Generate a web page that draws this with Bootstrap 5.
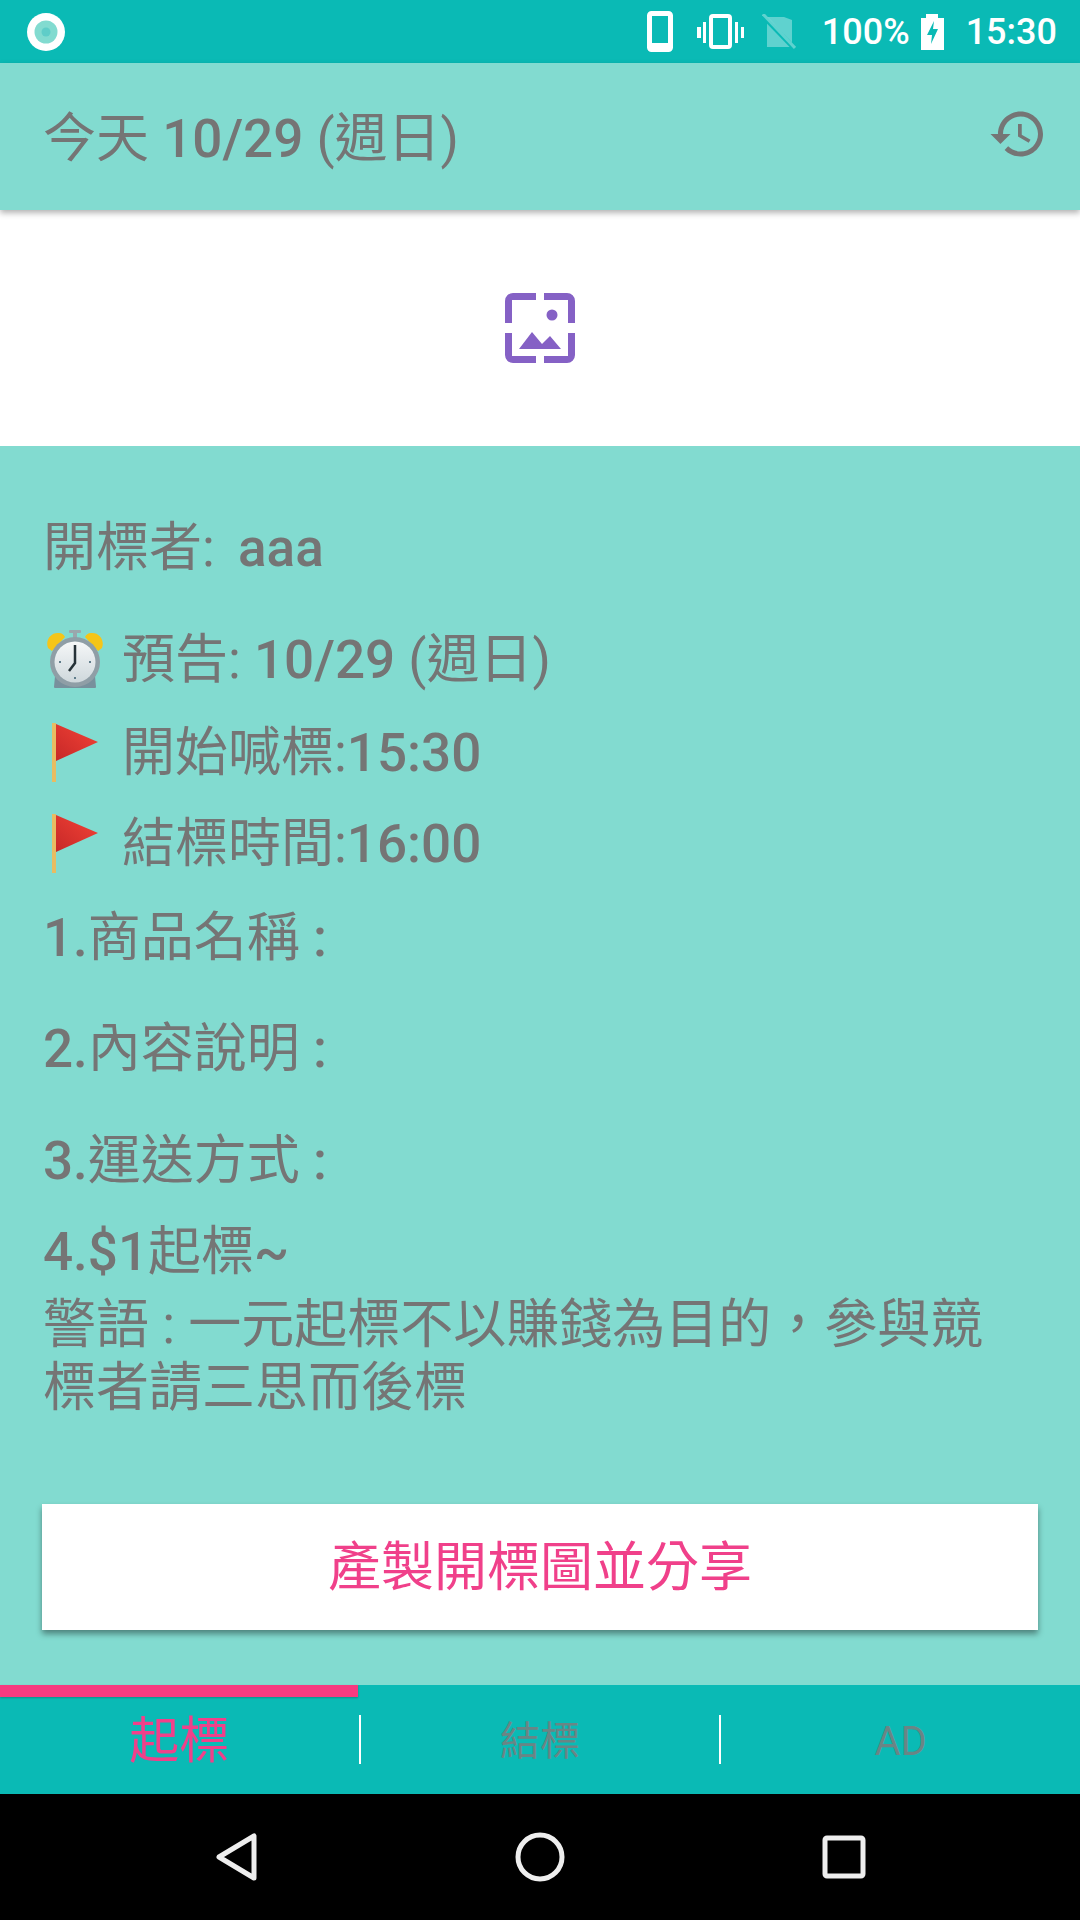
<!DOCTYPE html>
<html lang="zh-Hant">
<head>
    <meta charset="UTF-8">
    <meta name="viewport" content="width=device-width, initial-scale=1.0">
    <title>開標</title>
    <link href="https://cdn.jsdelivr.net/npm/bootstrap@5.3.0/dist/css/bootstrap.min.css" rel="stylesheet">
    <style>
        body {
            width: 1080px;
            height: 1920px;
            overflow: hidden;
            font-family: Roboto, "Noto Sans CJK TC", sans-serif;
            color: #757575;
            background: #82dbd0;
        }
        b { font-weight: 500; }
        .status-bar {
            height: 63px;
            background: #0abab5;
            color: #fff;
            font-size: 36px;
            font-weight: 500;
            line-height: 1;
            padding: 0 23px 0 27px;
        }
        .status-gap-a { margin-right: 24px; }
        .status-gap-b { margin-right: 18px; }
        .status-gap-c { margin-right: 26px; }
        .status-gap-d { margin-right: 11px; }
        .status-gap-e { margin-right: 22px; }
        .app-head {
            height: 147px;
            background: #82dbd0;
            padding: 0 32px 0 43px;
            font-size: 53px;
            line-height: 64px;
            box-shadow: 0 3px 6px rgba(0,0,0,.3);
            position: relative;
            z-index: 2;
        }
        .head-title { padding-top: 5px; }
        .head-icon { margin-bottom: 5px; }
        .banner {
            height: 236px;
            background: #fff;
        }
        .body-area {
            height: 1239px;
            background: #82dbd0;
            padding: 69px 42px 0 43px;
            font-size: 53px;
            line-height: 67px;
        }
        .txt-line { margin: 0; height: 64px; white-space: nowrap; }
        .line-txt { padding-top: 2px; }
        .gap-48 { margin-bottom: 48px; }
        .gap-47 { margin-bottom: 47px; }
        .gap-30 { margin-bottom: 30px; }
        .gap-29 { margin-bottom: 29px; }
        .gap-27 { margin-bottom: 27px; }
        .gap-9 { margin-bottom: 9px; }
        .gap-n1 { margin-bottom: -1px; }
        .name-gap { margin-left: 10px; }
        .emoji-box { width: 79px; flex: none; }
        .clock-pic { margin-left: 3px; }
        .flag-pic { margin-left: 9px; }
        .share-btn {
            width: 996px;
            height: 126px;
            margin: 85px 0 0 -1px;
            padding-top: 9px;
            background: #fff;
            color: #f0408a;
            font-size: 53px;
            line-height: 1;
            border: 0;
            border-radius: 0;
            box-shadow: 0 4px 6px rgba(0,0,0,.4);
        }
        .share-btn:hover { background: #fff; color: #f0408a; }
        .tab-strip {
            height: 109px;
            background: #0abab5;
            position: relative;
        }
        .tab-cell {
            flex: 1 1 0;
            text-align: center;
            font-size: 40px;
            line-height: 1;
            color: #6a8585;
            padding-top: 5px;
        }
        .tab-cell.on { color: #f0408a; font-size: 50px; padding-top: 3px; }
        .tab-sep { width: 2px; height: 49px; background: #fff; flex: none; }
        .tab-marker {
            position: absolute;
            left: 0;
            top: 0;
            width: 358px;
            height: 12px;
            background: #f63a80;
            box-shadow: 0 1px 2px rgba(0,0,0,.25);
        }
        .sys-nav {
            height: 126px;
            background: #000;
            padding: 0 214px 0 216px;
        }
    </style>
</head>
<body class="d-flex flex-column">
    <div class="status-bar d-flex align-items-center">
        <svg class="me-auto" width="38" height="38" viewBox="0 0 38 38">
            <circle cx="19" cy="19" r="19" fill="#fff"/>
            <circle cx="19" cy="19" r="11.5" fill="#82dbd0"/>
            <circle cx="19" cy="19" r="4.5" fill="#5fcdc8"/>
        </svg>
        <svg class="status-gap-a" width="26" height="41" viewBox="0 0 26 41">
            <rect x="2.5" y="2.5" width="21" height="36" rx="2" fill="none" stroke="#fff" stroke-width="5"/>
            <rect x="2" y="32" width="22" height="7" fill="#fff"/>
        </svg>
        <svg class="status-gap-b" width="47" height="35" viewBox="0 0 47 35">
            <rect x="14" y="2" width="19" height="31" rx="2" fill="none" stroke="#fff" stroke-width="4"/>
            <rect x="0" y="13" width="4" height="11" fill="#fff"/>
            <rect x="6" y="8" width="3" height="21" fill="#fff"/>
            <rect x="38" y="8" width="3" height="21" fill="#fff"/>
            <rect x="44" y="13" width="3" height="11" fill="#fff"/>
        </svg>
        <svg class="status-gap-c" width="34" height="36" viewBox="0 0 34 36">
            <path d="M5 3h17l8 3v27H5z" fill="#fff" fill-opacity=".35"/>
            <path d="M1 2l32 33" stroke="#0abab5" stroke-width="5"/>
            <path d="M1 0l32 34" stroke="#fff" stroke-opacity=".35" stroke-width="3"/>
        </svg>
        <span class="status-gap-d">100%</span>
        <svg class="status-gap-e" width="23" height="36" viewBox="0 0 23 36">
            <path d="M5 0h12v4h6v32H0V4h5z" fill="#fff"/>
            <path d="M13 7L6 21h5l-1 9 7-15h-5z" fill="#0abab5"/>
        </svg>
        <span>15:30</span>
    </div>

    <div class="app-head d-flex align-items-center justify-content-between">
        <div class="head-title">今天 <b>10/29</b> (週日)</div>
        <svg class="head-icon" width="60" height="60" viewBox="0 0 24 24" fill="#757575">
            <path d="M13 3c-4.97 0-9 4.03-9 9H1l3.89 3.89.07.14L9 12H6c0-3.87 3.13-7 7-7s7 3.13 7 7-3.13 7-7 7c-1.93 0-3.68-.79-4.94-2.06l-1.42 1.42C8.27 19.99 10.51 21 13 21c4.97 0 9-4.03 9-9s-4.03-9-9-9zm-1 5v5l4.28 2.54.72-1.21-3.5-2.08V8H12z"/>
        </svg>
    </div>

    <div class="banner d-flex align-items-center justify-content-center">
        <svg width="70" height="70" viewBox="0 0 70 70" fill="#8561c5">
            <path d="M31 0H8a8 8 0 0 0-8 8v22h7V7h24zM39 0h23a8 8 0 0 1 8 8v22h-7V7H39zM0 40v22a8 8 0 0 0 8 8h23v-7H7V40zM70 40v22a8 8 0 0 1-8 8H39v-7h24V40z"/>
            <circle cx="47" cy="22" r="5.5"/>
            <path d="M14 56l13-17 10 12 8-8 11 13z"/>
        </svg>
    </div>

    <div class="body-area">
        <svg width="0" height="0" class="d-block">
            <defs>
                <linearGradient id="flagRed" x1="0" y1="1" x2="1" y2="0">
                    <stop offset="0" stop-color="#c62828"/>
                    <stop offset="1" stop-color="#f44336"/>
                </linearGradient>
                <linearGradient id="clockFace" x1="0" y1="0" x2="0" y2="1">
                    <stop offset="0" stop-color="#f5f7f8"/>
                    <stop offset="1" stop-color="#cfd8dc"/>
                </linearGradient>
            </defs>
        </svg>
        <p class="txt-line gap-48">開標者: <b class="name-gap">aaa</b></p>
        <div class="txt-line gap-29 d-flex align-items-center">
            <div class="emoji-box">
                <svg width="58" height="58" viewBox="0 0 58 58" class="d-block clock-pic">
                    <path d="M2 18C-1 10 5 2 13 3c3 0 5 2 6 4L6 21z" fill="#f5c518"/>
                    <path d="M56 18c3-8-3-16-11-15-3 0-5 2-6 4l13 14z" fill="#f5c518"/>
                    <rect x="23" y="0" width="12" height="3" rx="1" fill="#9aa7ad"/>
                    <rect x="27" y="2" width="4" height="6" fill="#9aa7ad"/>
                    <path d="M9 46h40l1 11a1 1 0 0 1-1 1H9a1 1 0 0 1-1-1z" fill="#78909c"/>
                    <circle cx="29" cy="32" r="25" fill="#8f9ea6"/>
                    <circle cx="29" cy="32" r="20.5" fill="url(#clockFace)"/>
                    <path d="M29 15v18l-6 8" fill="none" stroke="#263238" stroke-width="2.5"/>
                    <path d="M13 32h2M43 32h2M29 47v2" stroke="#607d8b" stroke-width="2"/>
                </svg>
            </div>
            <div class="line-txt">預告: <b>10/29</b> (週日)</div>
        </div>
        <div class="txt-line gap-27 d-flex align-items-center">
            <div class="emoji-box">
                <svg width="46" height="59" viewBox="0 0 46 59" class="d-block flag-pic">
                    <rect x="0" y="0" width="4" height="59" fill="#e8bc62"/>
                    <path d="M4 1l42 18L4 38z" fill="url(#flagRed)"/>
                </svg>
            </div>
            <div class="line-txt">開始喊標:<b>15:30</b></div>
        </div>
        <div class="txt-line gap-30 d-flex align-items-center">
            <div class="emoji-box">
                <svg width="46" height="59" viewBox="0 0 46 59" class="d-block flag-pic">
                    <rect x="0" y="0" width="4" height="59" fill="#e8bc62"/>
                    <path d="M4 1l42 18L4 38z" fill="url(#flagRed)"/>
                </svg>
            </div>
            <div class="line-txt">結標時間:<b>16:00</b></div>
        </div>
        <p class="txt-line gap-47"><b>1.</b>商品名稱 <b>:</b></p>
        <p class="txt-line gap-48"><b>2.</b>內容說明 <b>:</b></p>
        <p class="txt-line gap-27"><b>3.</b>運送方式 <b>:</b></p>
        <p class="txt-line gap-9"><b>4.$1</b>起標<b>~</b></p>
        <p class="txt-line gap-n1">警語 : 一元起標不以賺錢為目的，參與競</p>
        <p class="txt-line">標者請三思而後標</p>
        <button type="button" class="btn share-btn d-block">產製開標圖並分享</button>
    </div>

    <div class="tab-strip d-flex align-items-center">
        <div class="tab-marker"></div>
        <div class="tab-cell on">起標</div>
        <div class="tab-sep"></div>
        <div class="tab-cell">結標</div>
        <div class="tab-sep"></div>
        <div class="tab-cell">AD</div>
    </div>

    <div class="sys-nav d-flex align-items-center justify-content-between">
        <svg width="41" height="48" viewBox="0 0 41 48" fill="none" stroke="#eee" stroke-width="5" stroke-linejoin="round">
            <path d="M38 3v42L3 24z"/>
        </svg>
        <svg width="50" height="50" viewBox="0 0 50 50" fill="none" stroke="#eee" stroke-width="5">
            <circle cx="25" cy="25" r="22"/>
        </svg>
        <svg width="44" height="44" viewBox="0 0 44 44" fill="none" stroke="#eee" stroke-width="5" stroke-linejoin="round">
            <rect x="3" y="3" width="38" height="38" rx="2"/>
        </svg>
    </div>

    <script src="https://cdn.jsdelivr.net/npm/bootstrap@5.3.0/dist/js/bootstrap.bundle.min.js"></script>
</body>
</html>
